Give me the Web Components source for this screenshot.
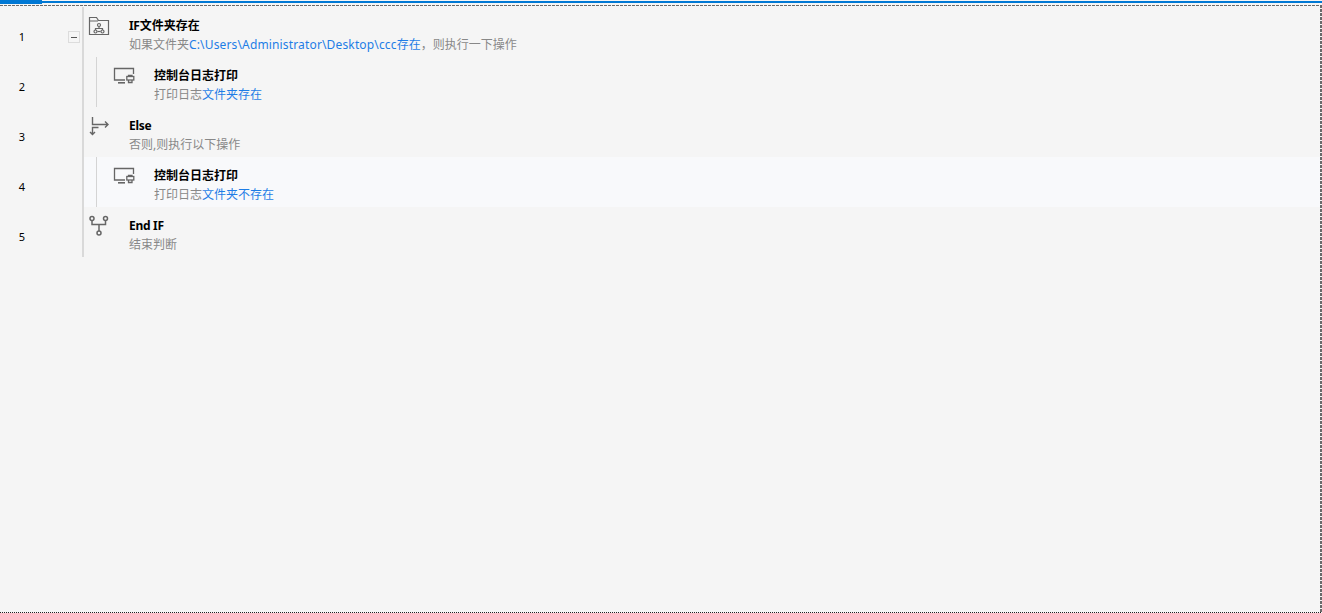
<!DOCTYPE html>
<html>
<head>
<meta charset="utf-8">
<title>flow</title>
<style>
  html, body { margin: 0; padding: 0; height: 100%; background: #f5f5f5; overflow: hidden; }
  body { font-family: "Noto Sans", "Noto Sans CJK SC", sans-serif; }
  .path { letter-spacing: .15px; }
  .tight { letter-spacing: -.3px; }
</style>
</head>
<body>
<template id="tpl-canvas">
  <style>
    :host { display: flex; flex-direction: column; width: 1322px; height: 613px; box-sizing: border-box; }
    .tabs { display: flex; flex: none; height: 4px; align-items: flex-start; }
    .tab { width: 42px; height: 4px; background: #0078d4; }
    .rest { flex: 1; height: 2px; margin-top: 1px; background: #0078d4; }
    .panel {
      flex: 1; box-sizing: border-box; min-height: 0;
      margin-top: 1px; padding: 2px 2px 1px 0;
      background-image:
        repeating-linear-gradient(90deg, #6a6a6a 0 3px, transparent 3px 4px),
        repeating-linear-gradient(180deg, #6a6a6a 0 3px, transparent 3px 4px),
        repeating-linear-gradient(90deg, #222 0 1px, transparent 1px 2px);
      background-size: 100% 1px, 2px 100%, 100% 1px;
      background-position: 0 0, 100% 0, 0 100%;
      background-repeat: no-repeat;
    }
  </style>
  <div class="tabs"><div class="tab"></div><div class="rest"></div></div>
  <div class="panel"><slot></slot></div>
</template>

<template id="tpl-row">
  <style>
    :host { display: grid; grid-template-columns: 82px 2px 1fr; height: 50px; color: #000; font-size: 12px; }
    :host([active]) .body { background: #f8f9fb; }
    .gutter { position: relative; display: flex; align-items: center; padding-top: 8px; box-sizing: border-box; }
    .num { width: 44px; text-align: center; font-size: 11px; }
    .fold { position: absolute; left: 68px; top: 24px; width: 12px; height: 12px; box-sizing: border-box; border: 1px solid #dcdcdc; display: flex; align-items: center; justify-content: center; }
    .fold[hidden] { display: none; }
    .fold::before { content: ""; width: 6px; height: 1px; background: #555; }
    .rule { background: #d9d9d9; }
    .body { display: flex; min-width: 0; }
    .guide { display: none; flex: none; width: 1px; margin-left: 12px; background: #d4d4d4; }
    :host([nested]) .guide { display: block; }
    .icon { flex: none; width: 22px; height: 22px; margin: 8px 0 0 4px; }
    :host([nested]) .icon { margin-left: 16px; }
    .text { margin-left: 19px; padding-top: 9px; }
    .title { font-weight: 700; line-height: 19px; height: 19px; white-space: nowrap; }
    .desc { line-height: 19px; color: #888; white-space: nowrap; }
    ::slotted([slot="icon"]) { display: block; width: 22px; height: 22px; }
  </style>
  <div class="gutter"><span class="num"></span><span class="fold" hidden></span></div>
  <div class="rule"></div>
  <div class="body">
    <div class="guide"></div>
    <div class="icon"><slot name="icon"></slot></div>
    <div class="text">
      <div class="title"><slot name="title"></slot></div>
      <div class="desc"><slot name="desc"></slot></div>
    </div>
  </div>
</template>

<flow-canvas>
  <flow-row num="1" fold>
    <svg slot="icon" viewBox="0 0 22 22" fill="none" stroke="#666" stroke-width="1.200"><path d="M1.500 6V19.500H20.500V5.500H10.500L8.500 2.500H1.500V6H10"/><circle cx="11" cy="10" r="1.500"/><path d="M11 11.500V13.500M7.500 15V13.500H14.500V15"/><circle cx="7.500" cy="16.500" r="1.500"/><circle cx="14.500" cy="16.500" r="1.500"/><path d="M9.500 16.500H12.500"/></svg>
    <span slot="title"><span class="tight">IF</span>文件夹存在</span>
    <span slot="desc">如果文件夹<link-text><span class="path">C:\Users\Administrator\Desktop\ccc</span>存在</link-text>，则执行一下操作</span>
  </flow-row>
  <flow-row num="2" nested>
    <svg slot="icon" viewBox="0 0 22 22" fill="none" stroke="#666" stroke-width="1.300"><path d="M12 15H1.500V3.500H20.500V9"/><path d="M5 17.800H12" stroke-width="1.600"/><path d="M15.500 11.500V10.500H19V11.500"/><rect x="13.800" y="11.500" width="7" height="3.500"/><path d="M15.500 15V17.500H19V15"/></svg>
    <span slot="title">控制台日志打印</span>
    <span slot="desc">打印日志<link-text>文件夹存在</link-text></span>
  </flow-row>
  <flow-row num="3">
    <svg slot="icon" viewBox="0 0 22 22" fill="none" stroke="#666" stroke-width="1.400"><path d="M4.500 2V9.500H20M17 6.500L20 9.500L17 12.500"/><path d="M10.500 12.500H4.500V19.500M2 17L4.500 19.500L7 17"/></svg>
    <span slot="title"><span class="tight">Else</span></span>
    <span slot="desc">否则,则执行以下操作</span>
  </flow-row>
  <flow-row num="4" nested active>
    <svg slot="icon" viewBox="0 0 22 22" fill="none" stroke="#666" stroke-width="1.300"><path d="M12 15H1.500V3.500H20.500V9"/><path d="M5 17.800H12" stroke-width="1.600"/><path d="M15.500 11.500V10.500H19V11.500"/><rect x="13.800" y="11.500" width="7" height="3.500"/><path d="M15.500 15V17.500H19V15"/></svg>
    <span slot="title">控制台日志打印</span>
    <span slot="desc">打印日志<link-text>文件夹不存在</link-text></span>
  </flow-row>
  <flow-row num="5">
    <svg slot="icon" viewBox="0 0 22 22" fill="none" stroke="#666" stroke-width="1.500"><circle cx="4" cy="3.500" r="2"/><circle cx="17.500" cy="3.500" r="2"/><circle cx="11" cy="18" r="2"/><path d="M4 5.500V9.500H17.500V5.500M11 9.500V16"/></svg>
    <span slot="title"><span class="tight">End IF</span></span>
    <span slot="desc">结束判断</span>
  </flow-row>
</flow-canvas>

<script>
class FlowCanvas extends HTMLElement {
  constructor() {
    super();
    this.attachShadow({ mode: 'open' }).appendChild(document.getElementById('tpl-canvas').content.cloneNode(true));
  }
}

class FlowRow extends HTMLElement {
  constructor() {
    super();
    this.attachShadow({ mode: 'open' }).appendChild(document.getElementById('tpl-row').content.cloneNode(true));
  }

  connectedCallback() {
    this.shadowRoot.querySelector('.num').textContent = this.getAttribute('num');
    this.shadowRoot.querySelector('.fold').hidden = !this.hasAttribute('fold');
  }
}

class LinkText extends HTMLElement {
  constructor() {
    super();
    this.attachShadow({ mode: 'open' }).innerHTML = '<style>:host { display: inline; color: #1e7de6; }</style><slot></slot>';
  }
}

customElements.define('flow-canvas', FlowCanvas);
customElements.define('flow-row', FlowRow);
customElements.define('link-text', LinkText);
</script>
</body>
</html>
